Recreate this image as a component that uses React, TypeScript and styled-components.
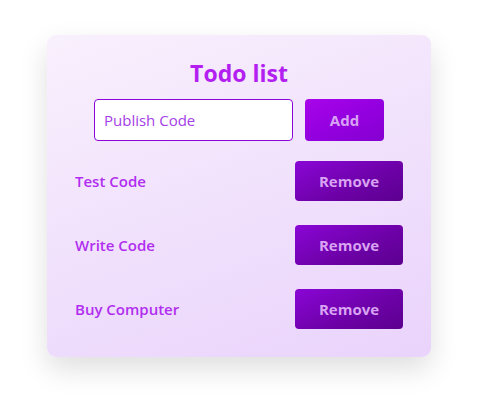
import React, { useState } from "react";
import styled, { createGlobalStyle } from "styled-components";

const Global = createGlobalStyle`
  html, body { margin: 0; padding: 0; background: #ffffff; }
  body { font-family: "Open Sans", "Noto Sans", sans-serif; }
  * { box-sizing: border-box; }
`;

const Page = styled.div`
  min-height: 404px;
  padding: 35px 0 0 47px;
`;

const Card = styled.div`
  width: 384px;
  height: 322px;
  padding: 20px 28px 28px;
  border-radius: 9px;
  background: linear-gradient(160deg, #f9f0fd 0%, #f0e0fc 55%, #ead3fc 100%);
  box-shadow: 0 12px 28px rgba(0, 0, 0, 0.13);
  display: flex;
  flex-direction: column;
`;

const Title = styled.h1`
  margin: 0;
  font-size: 23px;
  line-height: 36px;
  font-weight: 700;
  color: #b21ff0;
  text-align: center;
`;

const Form = styled.div`
  display: flex;
  justify-content: center;
  gap: 12px;
  margin-top: 8px;
`;

const Input = styled.input`
  width: 199px;
  height: 42px;
  border: 1px solid #8a05d6;
  border-radius: 4px;
  background: #ffffff;
  padding: 0 9px;
  font-family: inherit;
  font-size: 15px;
  color: #a43ee6;
  outline: none;
`;

const Button = styled.button<{ $w: number; $h: number; $dark?: boolean }>`
  width: ${(p) => p.$w}px;
  height: ${(p) => p.$h}px;
  border: none;
  border-radius: 4px;
  background: ${(p) =>
    p.$dark
      ? "linear-gradient(155deg, #8a06d6 0%, #6c01a6 60%, #5c008f 100%)"
      : "linear-gradient(155deg, #a804ea 0%, #9400e0 50%, #8500d0 100%)"};
  color: #d9a3f3;
  font-family: inherit;
  font-size: 15px;
  font-weight: 700;
  cursor: pointer;
`;

const List = styled.div`
  display: flex;
  flex-direction: column;
  gap: 24px;
  margin-top: 20px;
`;

const Row = styled.div`
  display: flex;
  align-items: center;
  justify-content: space-between;
`;

const Label = styled.span`
  font-size: 15px;
  font-weight: 600;
  color: #b12ef0;
`;

export default function App() {
  const [items] = useState(["Test Code", "Write Code", "Buy Computer"]);
  return (
    <>
      <Global />
      <Page>
        <Card>
          <Title>Todo list</Title>
          <Form>
            <Input defaultValue="Publish Code" />
            <Button $w={79} $h={42}>Add</Button>
          </Form>
          <List>
            {items.map((t) => (
              <Row key={t}>
                <Label>{t}</Label>
                <Button $w={108} $h={40} $dark>Remove</Button>
              </Row>
            ))}
          </List>
        </Card>
      </Page>
    </>
  );
}
